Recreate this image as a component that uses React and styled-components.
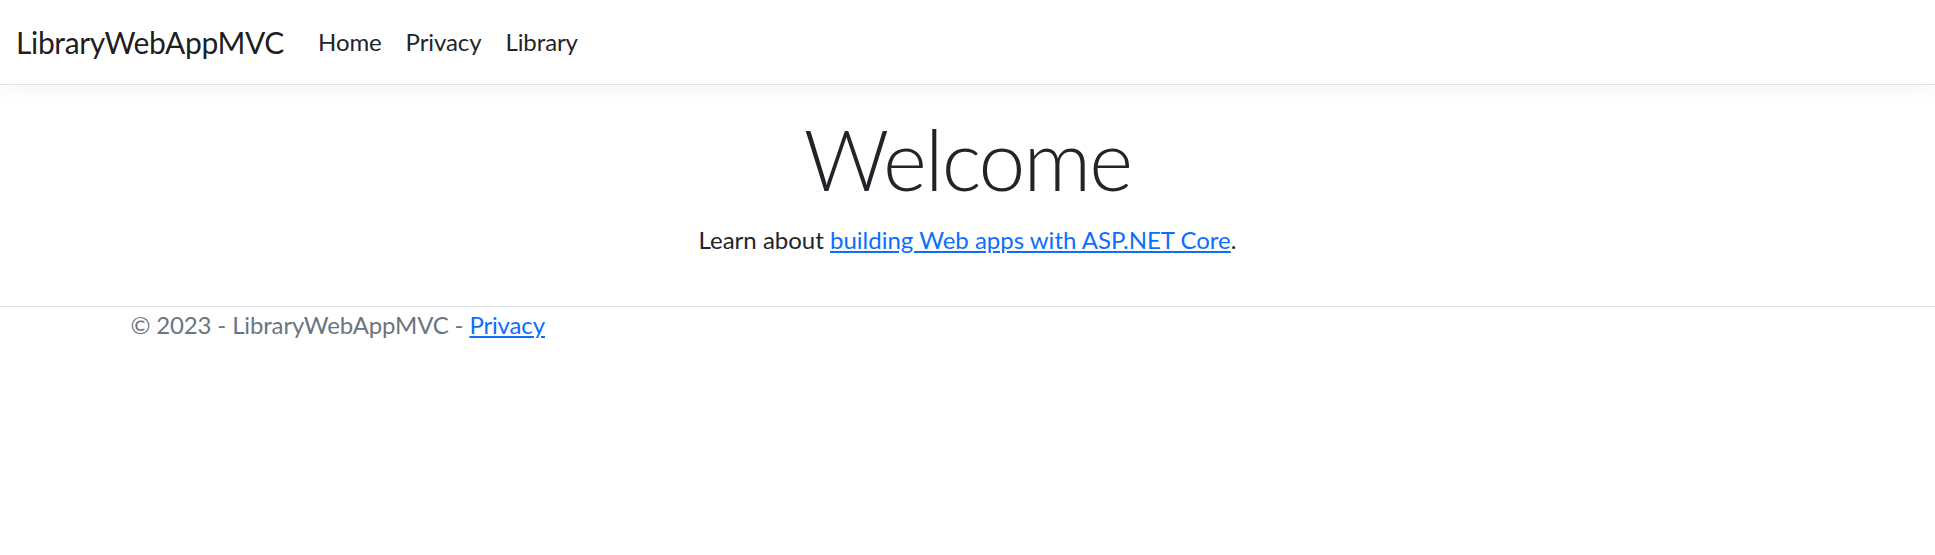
import React from "react";
import styled, { createGlobalStyle } from "styled-components";

const GlobalStyle = createGlobalStyle`
  html, body { margin: 0; padding: 0; background: #fff; }
  body {
    font-family: Lato, "Noto Sans", sans-serif;
    font-size: 24px;
    line-height: 1.5;
    color: #212529;
  }
  * { box-sizing: border-box; }
`;

const Header = styled.header`
  margin-bottom: 24px;
`;

const Navbar = styled.nav`
  display: flex;
  align-items: center;
  padding: 12px 18px 12px 16px;
  background: #fff;
  border-bottom: 1px solid #dee2e6;
  box-shadow: 0 6px 18px rgba(0, 0, 0, 0.04);
`;

const Brand = styled.a`
  font-size: 30px;
  line-height: 45px;
  padding: 7.5px 0;
  margin-right: 22px;
  color: rgba(0, 0, 0, 0.9);
  text-decoration: none;
  letter-spacing: -0.35px;
  white-space: nowrap;
`;

const NavList = styled.ul`
  display: flex;
  list-style: none;
  margin: 0;
  padding: 0;
`;

const NavLink = styled.a`
  display: block;
  padding: 12px 12px;
  font-size: 24px;
  line-height: 36px;
  color: #212529;
  text-decoration: none;
  letter-spacing: -0.1px;
`;

const Container = styled.div`
  width: 100%;
  max-width: 1710px;
  margin: 0 auto;
  padding: 0 18px;
  text-align: ${(p) => p.$align || "left"};
`;

const Main = styled.main`
  padding-bottom: 24px;
`;

const Display = styled.h1`
  margin: 0 0 12px;
  font-size: 84px;
  font-weight: 300;
  line-height: 1.2;
  letter-spacing: -1.9px;
`;

const Lead = styled.p`
  margin: 0 0 24px;
  letter-spacing: 0;
`;

const Link = styled.a`
  color: #0d6efd;
  text-decoration: underline;
`;

const Footer = styled.footer`
  border-top: 1px solid #dee2e6;
  color: #6c757d;
  white-space: nowrap;
  letter-spacing: -0.15px;
`;

export default function App() {
  return (
    <>
      <GlobalStyle />
      <Header>
        <Navbar>
          <Brand href="#">LibraryWebAppMVC</Brand>
          <NavList>
            <li><NavLink href="#">Home</NavLink></li>
            <li><NavLink href="#">Privacy</NavLink></li>
            <li><NavLink href="#">Library</NavLink></li>
          </NavList>
        </Navbar>
      </Header>
      <Container $align="center">
        <Main>
          <Display>Welcome</Display>
          <Lead>
            Learn about <Link href="#">building Web apps with ASP.NET Core</Link>.
          </Lead>
        </Main>
      </Container>
      <Footer>
        <Container>
          © 2023 - LibraryWebAppMVC - <Link href="#">Privacy</Link>
        </Container>
      </Footer>
    </>
  );
}
